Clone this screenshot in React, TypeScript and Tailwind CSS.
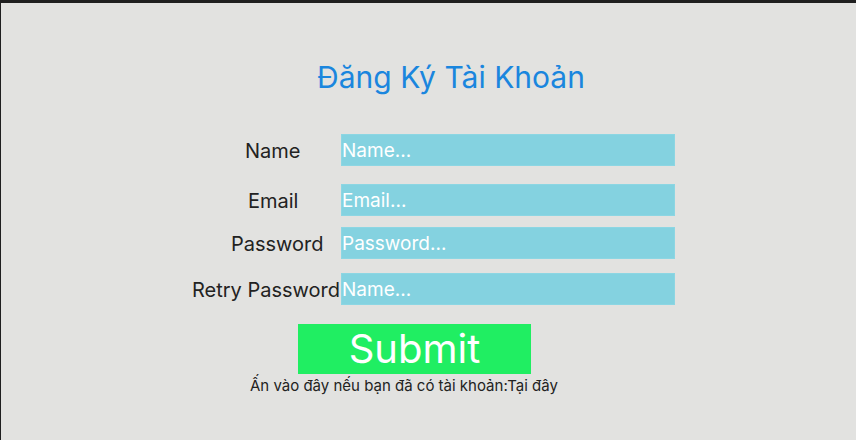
export default function App() {
  const rows = [
    { label: "Name", pad: "pl-[53px]", placeholder: "Name...", mt: "mt-[39px]", type: "text" },
    { label: "Email", pad: "pl-[56px]", placeholder: "Email...", mt: "mt-[18px]", type: "email" },
    { label: "Password", pad: "pl-[39px]", placeholder: "Password...", mt: "mt-[11px]", type: "password" },
    { label: "Retry Password", pad: "pl-0", placeholder: "Name...", mt: "mt-[14px]", type: "password" },
  ];

  return (
    <div
      className="h-screen w-full bg-[#e2e2e0] border-t-[3px] border-l border-[#1f1f1f] text-[#222222]"
      style={{ fontFamily: "Inter, 'Noto Sans', sans-serif" }}
    >
      <div className="flex flex-col items-start pl-[191px] pt-[56px]">
        {/* Title */}
        <h1 className="w-[518px] text-center text-[30px] leading-[36px] text-[#1a86de] font-normal">
          Đăng Ký Tài Khoản
        </h1>

        {/* Fields */}
        {rows.map((r) => (
          <div key={r.label} className={`flex items-center ${r.mt}`}>
            <label className={`w-[149px] pt-[2px] text-[20px] leading-[24px] whitespace-nowrap ${r.pad}`}>
              {r.label}
            </label>
            <input
              type={r.type}
              placeholder={r.placeholder}
              className="w-[334px] h-[32px] bg-[#84d2e0] border border-[#8cd6e3] px-0 pt-[1px] text-[19px] text-white placeholder:text-white outline-none"
            />
          </div>
        ))}

        {/* Submit */}
        <button className="ml-[106px] mt-[19px] w-[233px] h-[50px] bg-[#20ee62] text-white text-[40px] leading-[50px]">
          Submit
        </button>

        <p className="ml-[58px] mt-[3px] text-[15px] leading-[18px]">
          Ấn vào đây nếu bạn đã có tài khoản:Tại đây
        </p>
      </div>
    </div>
  );
}
